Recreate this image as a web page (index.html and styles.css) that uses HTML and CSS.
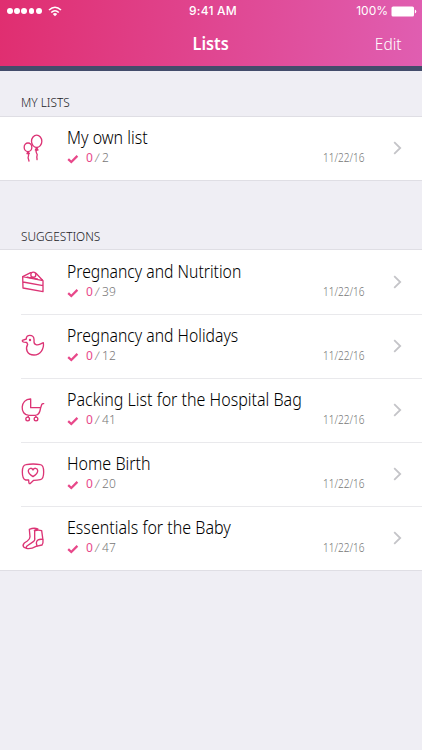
FILE: index.html
```
<!DOCTYPE html>
<html lang="en">
<head>
<meta charset="utf-8">
<title>Lists</title>
<link rel="stylesheet" href="styles.css">
</head>
<body>
<svg class="defs" width="0" height="0">
  <symbol id="check" viewBox="0 0 12 10"><path d="M1.2 5.2 4.3 8 10.4 1.9" fill="none" stroke="#e8488a" stroke-width="2.3"/></symbol>
  <symbol id="chevron" viewBox="0 0 9 14"><path d="M1.2 1.2 7.2 7 1.2 12.8" fill="none" stroke="#c4c4c8" stroke-width="1.8"/></symbol>
</svg>
<header class="header">
  <div class="status">
    <div class="signal">
      <i></i><i></i><i></i><i></i><i></i>
      <svg class="wifi" width="14" height="11" viewBox="0 0 14 11"><g fill="none" stroke="#fff" stroke-width="1.6"><path d="M1 4Q7-1.5 13 4M3.2 6.5Q7 3 10.8 6.5"/></g><path d="M4.8 8Q7 6.2 9.2 8L7 10.3z" fill="#fff"/></svg>
    </div>
    <div class="clock">9:41 AM</div>
    <div class="power"><span>100%</span><svg width="26" height="11" viewBox="0 0 26 11"><rect x=".5" y=".5" width="22.5" height="10" rx="1.6" fill="#fff"/><path d="M23.8 3.5Q25.3 3.8 25.3 5.5T23.8 7.5z" fill="#fff"/></svg></div>
  </div>
  <div class="nav"><span></span><h1>Lists</h1><a class="edit"><span>Edit</span></a></div>
</header>
<main>
  <h2 class="first"><span>MY LISTS</span></h2>
  <section>
    <div class="row">
      <svg class="icon" viewBox="0 -27 150 192"><ellipse cx="80" cy="49" rx="15.5" ry="18.5"/><ellipse cx="54" cy="67" rx="11.5" ry="13"/><path d="M80 68l-4 7h8zM54 80l-3 6h7zM80 75c-7 9 5 9 1 18-2 5 1 6 0 11M55 86c3 8-3 10 0 15l2 7"/></svg>
      <div class="body"><div class="title wide"><span>My own list</span></div><div class="meta"><svg class="check"><use href="#check"/></svg><b>0</b><i>/</i><span>2</span></div></div>
      <time><span>11/22/16</span></time><svg class="chevron"><use href="#chevron"/></svg>
    </div>
  </section>
  <h2 class="second"><span>SUGGESTIONS</span></h2>
  <section class="suggestions">
    <div class="row">
      <svg class="icon" viewBox="0 -30 150 192"><path d="M38 50 99 62V95L39 84zM38 50 62 38M78 40 99 62M39 66 99 77"/><circle cx="70" cy="44" r="7.5"/><path d="M53 51q8 4 15 1 8 5 14 5"/></svg>
      <div class="body"><div class="title"><span>Pregnancy and Nutrition</span></div><div class="meta"><svg class="check"><use href="#check"/></svg><b>0</b><i>/</i><span>39</span></div></div>
      <time><span>11/22/16</span></time><svg class="chevron"><use href="#chevron"/></svg>
    </div>
    <div class="row">
      <svg class="icon" viewBox="0 -18 150 192"><path d="M49 57C47 43 71 42 72 58C73 67 69 71 78 74C86 77 91 71 100 68C103 88 90 105 72 105C51 105 45 87 53 73L50 67M49 57 37 61Q36 68 50 67"/><circle cx="60" cy="60" r="1.6"/></svg>
      <div class="body"><div class="title"><span>Pregnancy and Holidays</span></div><div class="meta"><svg class="check"><use href="#check"/></svg><b>0</b><i>/</i><span>12</span></div></div>
      <time><span>11/22/16</span></time><svg class="chevron"><use href="#chevron"/></svg>
    </div>
    <div class="row">
      <svg class="icon" viewBox="0 -21 150 192"><path d="M62 42V68H92M62 42C30 41 28 91 57 91H76C88 91 90 79 92 68L95 59Q97 55 101 56M56 91l-2 5M77 91l1 5"/><circle cx="53" cy="102" r="5.5"/><circle cx="78" cy="102" r="5.5"/></svg>
      <div class="body"><div class="title wide"><span>Packing List for the Hospital Bag</span></div><div class="meta"><svg class="check"><use href="#check"/></svg><b>0</b><i>/</i><span>41</span></div></div>
      <time><span>11/22/16</span></time><svg class="chevron"><use href="#chevron"/></svg>
    </div>
    <div class="row">
      <svg class="icon" viewBox="0 -24 150 192"><path d="M56 90H47C39 88 37 78 37 66S40 45 48 44Q69 40 91 44C99 45 101 54 101 66S98 88 91 89Q82 91 71 91L60 101Q56 102 56 90Z"/><path d="M69 80C60 74 54 67 55 61 57 53 66 53 69 60 72 53 82 53 83 61 84 67 78 74 69 80Z"/></svg>
      <div class="body"><div class="title wide"><span>Home Birth</span></div><div class="meta"><svg class="check"><use href="#check"/></svg><b>0</b><i>/</i><span>20</span></div></div>
      <time><span>11/22/16</span></time><svg class="chevron"><use href="#chevron"/></svg>
    </div>
    <div class="row">
      <svg class="icon" viewBox="0 -27 150 192"><path d="M74 48Q84 43 95 47L99 76Q100 85 96 90L78 94Q65 102 53 101 45 100 51 93L70 80Q76 76 74 67Z"/><path d="M73 46 84 42Q72 37 58 43L60 65Q60 72 52 78L43 84Q36 91 42 97L51 100M98 73Q80 71 79 84L81 93"/></svg>
      <div class="body"><div class="title wide"><span>Essentials for the Baby</span></div><div class="meta"><svg class="check"><use href="#check"/></svg><b>0</b><i>/</i><span>47</span></div></div>
      <time><span>11/22/16</span></time><svg class="chevron"><use href="#chevron"/></svg>
    </div>
  </section>
</main>
</body>
</html>
```
FILE: styles.css
```
* { box-sizing: border-box; }
body { margin: 0; height: 750px; overflow: hidden; background: #efeef4; font-family: "Noto Sans", sans-serif; color: #000; }
.defs { display: block; }
.header { height: 71px; border-bottom: 5px solid #434c6b; background: linear-gradient(95deg, #e02e70, #e05eb1); color: #fff; }
.status { height: 22px; display: grid; grid-template-columns: 1fr 1fr 1fr; align-items: center; font: 500 12px/22px Inter, sans-serif; padding: 0 5px 0 7px; }
.signal { display: flex; align-items: center; gap: 1.3px; }
.signal i { width: 5.9px; height: 5.9px; border-radius: 50%; background: #fff; }
.wifi { margin-left: 5.5px; }
.clock { text-align: center; letter-spacing: .2px; padding-left: 2px; }
.power { display: flex; justify-content: flex-end; align-items: center; gap: 3px; font-weight: 400; }
.nav { height: 44px; display: grid; grid-template-columns: 1fr 1fr 1fr; align-items: center; padding: 0 20px; }
h1 { margin: 0; text-align: center; font-size: 17px; line-height: 44px; font-weight: 600; transform: scaleX(.96); }
.edit { text-align: right; font-size: 16px; font-weight: 300; }
.edit span { display: inline-block; transform: scaleX(.97); transform-origin: right; }
h2 { margin: 0; padding-left: 21px; font-size: 13px; line-height: 18px; font-weight: 350; color: #19191c; }
h2 span { display: inline-block; transform: scaleX(.91); transform-origin: left; }
.first { height: 45px; padding-top: 22px; }
.second { height: 68px; padding-top: 46px; }
section { background: #fff; box-shadow: inset 0 1px #dfdee4; border-bottom: 1px solid #dfdee4; }
.suggestions { padding-top: 1px; }
.row { height: 64px; display: flex; position: relative; }
.row + .row::before { content: ""; position: absolute; left: 21px; right: 0; top: 0; height: 1px; background: #e9e9ec; }
.icon { width: 50px; height: 64px; margin-left: 10px; fill: none; stroke: #dc3475; stroke-width: 4; stroke-linejoin: round; stroke-linecap: round; }
.body { width: 257px; padding: 9px 0 0 7px; }
.title { font-size: 18px; line-height: 24px; height: 25px; white-space: nowrap; font-weight: 350; }
.title span { display: inline-block; transform: scaleX(.873); transform-origin: left; }
.title.wide span { transform: scaleX(.89); }
.meta { display: flex; align-items: center; height: 16px; font-size: 12px; line-height: 16px; font-weight: 300; color: #777; }
.meta b { margin-left: 7px; font-weight: 400; color: #e8488a; }
.meta i { margin: 0 3px 0 2px; font-style: normal; transform: skewX(-8deg); }
.check { width: 12px; height: 10px; margin-top: 2px; }
time { width: 47px; margin-right: 1px; font-size: 12px; line-height: 16px; padding-top: 34px; font-weight: 300; color: #777; white-space: nowrap; display: flex; justify-content: flex-end; }
time span { transform: scaleX(.84); transform-origin: right; }
.chevron { width: 9px; height: 14px; margin: 25px 0 0 28px; }
```
